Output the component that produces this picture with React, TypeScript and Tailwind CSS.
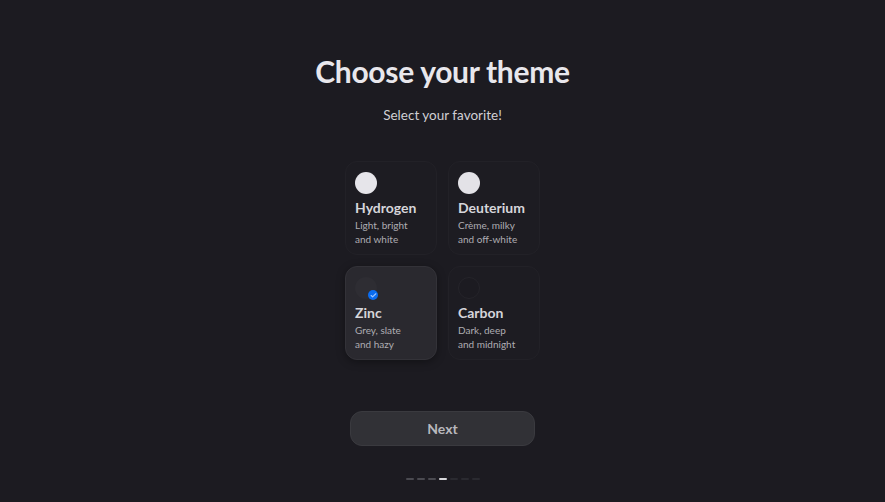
import { Check } from 'lucide-react';

type Theme = {
    name: string;
    line1: string;
    line2: string;
    swatch: string;
    selected?: boolean;
};

const themes: Theme[] = [
    { name: 'Hydrogen', line1: 'Light, bright', line2: 'and white', swatch: 'bg-[#e6e5ea]' },
    { name: 'Deuterium', line1: 'Crème, milky', line2: 'and off-white', swatch: 'bg-[#e3e2e7]' },
    { name: 'Zinc', line1: 'Grey, slate', line2: 'and hazy', swatch: 'bg-[#2e2d33]', selected: true },
    { name: 'Carbon', line1: 'Dark, deep', line2: 'and midnight', swatch: 'bg-[#1c1b21] border border-[#25242a]' },
];

function ThemeCard({ theme }: { theme: Theme }) {
    return (
        <div
            className={`w-[92px] h-[94px] rounded-xl pl-[9px] pr-[8px] pt-[10px] flex flex-col ${
                theme.selected
                    ? 'bg-[#2a292f] border border-[#333238] shadow-[0_2px_8px_rgba(0,0,0,0.35)]'
                    : 'bg-[#1d1c22] border border-[#222127]'
            }`}
        >
            <div className="relative w-[22px] h-[22px]">
                <div className={`w-[22px] h-[22px] rounded-full ${theme.swatch}`} />
                {theme.selected && (
                    <div className="absolute right-[-1px] bottom-[-1px] w-[10px] h-[10px] rounded-full bg-[#0a6cf0] flex items-center justify-center">
                        <Check size={7} strokeWidth={4} className="text-[#9cc4ff]" />
                    </div>
                )}
            </div>
            <div className="mt-[5px] text-[14px] leading-[18px] font-bold text-[#d6d5da]">{theme.name}</div>
            <div className="mt-[1px] text-[10px] leading-[14px] text-[#aeadb3]">
                <div>{theme.line1}</div>
                <div>{theme.line2}</div>
            </div>
        </div>
    );
}

export default function App() {
    return (
        <div
            className="w-full min-h-screen h-[502px] bg-[#1c1b21] flex flex-col items-center"
            style={{ fontFamily: 'Lato, "Noto Sans", sans-serif' }}
        >
            <h1 className="mt-[52px] text-[30px] leading-[38px] font-bold tracking-[-0.3px] text-[#e8e7ec]">
                Choose your theme
            </h1>
            <p className="mt-[15px] text-[13.5px] leading-[20px] text-[#d0cfd4]">Select your favorite!</p>

            <div className="mt-[36px] grid grid-cols-2 gap-x-[11px] gap-y-[11px]">
                {themes.map((t) => (
                    <ThemeCard key={t.name} theme={t} />
                ))}
            </div>

            <button className="mt-[51px] w-[185px] h-[35px] rounded-xl bg-[#313136] border border-[#3a3a3f] text-[14px] leading-[20px] font-bold text-[#b8b8bd]">
                Next
            </button>

            <div className="mt-[32px] flex gap-[3px]">
                {[0, 1, 2, 3, 4, 5, 6].map((i) => (
                    <div
                        key={i}
                        className={`w-[8px] h-[2px] rounded-full ${
                            i === 3 ? 'bg-[#d8d8dc]' : i < 3 ? 'bg-[#4a4a50]' : 'bg-[#2a2a30]'
                        }`}
                    />
                ))}
            </div>
        </div>
    );
}
